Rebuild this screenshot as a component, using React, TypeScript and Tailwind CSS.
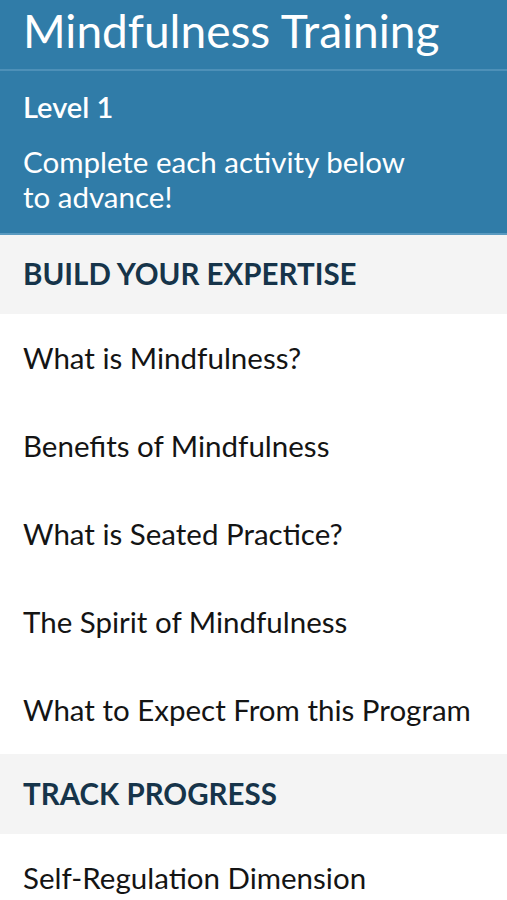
import React from "react";

const items1 = [
  "What is Mindfulness?",
  "Benefits of Mindfulness",
  "What is Seated Practice?",
  "The Spirit of Mindfulness",
  "What to Expect From this Program",
];

export default function App() {
  return (
    <div className="w-[507px] h-[900px] overflow-hidden bg-white font-['Lato',sans-serif]">
      <div className="bg-[#307ca8] text-white">
        <div className="h-[69px] px-[23px] pt-[8px] text-[46px] leading-none whitespace-nowrap">
          Mindfulness Training
        </div>
        <div className="h-[2px] bg-[#4d90b8]" />
        <div className="h-[164px] px-[23px] pt-[19px] border-b-2 border-[#5a9ac0]">
          <div className="text-[29px] font-semibold leading-[34px]">Level 1</div>
          <div className="mt-[20px] text-[29.5px] leading-[35px]">
            Complete each activity below
            <br />
            to advance!
          </div>
        </div>
      </div>
      <div className="h-[79px] bg-[#f4f4f4] flex items-center px-[23px] text-[29.5px] font-bold text-[#16344a]">
        BUILD YOUR EXPERTISE
      </div>
      {items1.map((t) => (
        <div key={t} className="h-[88px] flex items-center px-[23px] text-[29.5px] text-[#141414] whitespace-nowrap">
          {t}
        </div>
      ))}
      <div className="h-[80px] bg-[#f4f4f4] flex items-center px-[23px] text-[29.5px] font-bold text-[#16344a]">
        TRACK PROGRESS
      </div>
      <div className="h-[88px] flex items-center px-[23px] text-[29.5px] text-[#141414]">
        Self-Regulation Dimension
      </div>
    </div>
  );
}
